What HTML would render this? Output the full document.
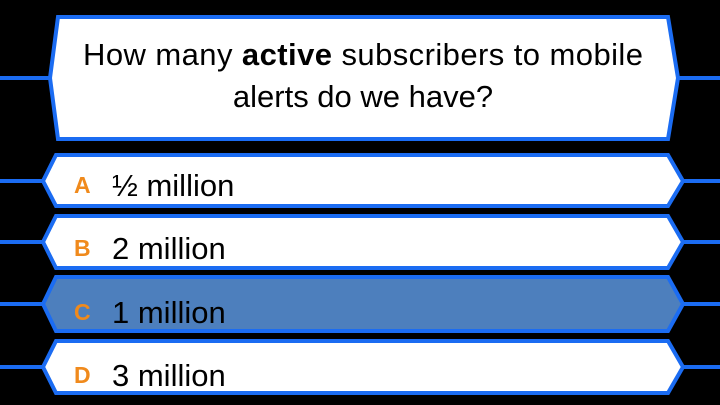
<!DOCTYPE html>
<html><head><meta charset="utf-8"><style>
html,body{margin:0;padding:0;background:#000;width:720px;height:405px;overflow:hidden}
svg{display:block}
text{font-family:"Liberation Sans",sans-serif}
</style></head><body>
<svg width="720" height="405" viewBox="0 0 720 405">
<g stroke="#1b6cf2" stroke-width="4" stroke-linejoin="miter">
<line x1="0" y1="78" x2="50" y2="78"/><line x1="676" y1="78" x2="720" y2="78"/>
<polygon points="58,17 668,17 678,78 668,139 58,139 50,78" fill="#fff"/>
<line x1="0" y1="181" x2="44" y2="181"/><line x1="682" y1="181" x2="720" y2="181"/>
<polygon points="56,155 668,155 683,181 668,206 56,206 43,181" fill="#fff"/>
<line x1="0" y1="242" x2="44" y2="242"/><line x1="682" y1="242" x2="720" y2="242"/>
<polygon points="56,216 668,216 683,242 668,268 56,268 43,242" fill="#fff"/>
<line x1="0" y1="304" x2="44" y2="304"/><line x1="682" y1="304" x2="720" y2="304"/>
<polygon points="56,277 668,277 683,304 668,331 56,331 43,304" fill="#4d7fbd"/>
<line x1="0" y1="367" x2="44" y2="367"/><line x1="682" y1="367" x2="720" y2="367"/>
<polygon points="56,341 668,341 683,367 668,393 56,393 43,367" fill="#fff"/>
</g>
<text x="363" y="65" font-size="31" text-anchor="middle" fill="#000" textLength="560">How many <tspan font-weight="bold">active</tspan> subscribers to mobile</text>
<text x="363" y="107" font-size="31" text-anchor="middle" fill="#000">alerts do we have?</text>
<g font-size="23" font-weight="bold" fill="#f08a1c">
<text x="74" y="193">A</text><text x="74" y="256">B</text><text x="74" y="320">C</text><text x="74" y="383">D</text>
</g>
<g font-size="31" fill="#000">
<text x="112" y="196">½ million</text><text x="112" y="259">2 million</text><text x="112" y="323">1 million</text><text x="112" y="386">3 million</text>
</g>
</svg>
</body></html>
